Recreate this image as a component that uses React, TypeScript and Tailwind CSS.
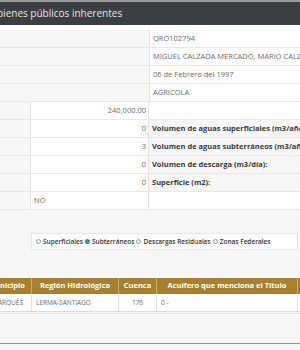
const valueRows = ["QRO102794", "MIGUEL CALZADA MERCADO, MARIO CALZADA MERCADO", "06 de Febrero del 1997", "AGRICOLA"];

const numberRows: { value: string; label: string; left?: boolean }[] = [
  { value: "240,000.00", label: "" },
  { value: "0", label: "Volumen de aguas superficiales (m3/año):" },
  { value: "3", label: "Volumen de aguas subterráneos (m3/año):" },
  { value: "0", label: "Volumen de descarga (m3/día):" },
  { value: "0", label: "Superficie (m2):" },
  { value: "NO", label: "", left: true },
];

const radios = [
  { label: "Superficiales", checked: false },
  { label: "Subterráneos", checked: true },
  { label: "Descargas Residuales", checked: false },
  { label: "Zonas Federales", checked: false },
];

function Radio({ checked }: { checked: boolean }) {
  return (
    <span
      className={`inline-block w-[5px] h-[5px] rounded-full border ${
        checked ? "border-[#2a7f93] bg-[#3b98ad]" : "border-[#9a9a9a] bg-white"
      }`}
    />
  );
}

export default function App() {
  return (
    <div className="w-[300px] h-[350px] overflow-hidden bg-[#f6f6f6] font-['Open_Sans',sans-serif] text-[#6a6a6a]">
      <div className="h-[2px] bg-[#9c9c9c]" />
      <div className="h-[23px] bg-[#3b3f42] flex items-center overflow-hidden">
        <span className="ml-[-3px] text-[10px] text-[#e4e4e4] whitespace-nowrap">bienes públicos inherentes</span>
      </div>
      <div className="h-[5px] bg-white" />

      {valueRows.map((v) => (
        <div key={v} className="flex h-[18px] border-b border-[#e8e8e8]">
          <div className="w-[149px] bg-[#f7f7f7]" />
          <div className="flex-1 bg-white border-l border-[#e3e3e3] flex items-center pl-[3px] text-[7.5px] whitespace-nowrap overflow-hidden">
            {v}
          </div>
        </div>
      ))}

      {numberRows.map((r, i) => (
        <div key={i} className="flex h-[18px] border-b border-[#e8e8e8]">
          <div className="w-[30px] bg-[#f7f7f7]" />
          <div
            className={`w-[119px] bg-white border-x border-[#e3e3e3] flex items-center text-[7.5px] ${
              r.left ? "pl-[3px]" : "justify-end pr-[2px]"
            }`}
          >
            {r.value}
          </div>
          <div
            className={`flex-1 flex items-center pl-[3px] text-[7.5px] font-bold text-[#3a3a3a] whitespace-nowrap overflow-hidden ${
              r.label ? "bg-[#f7f7f7]" : "bg-white"
            }`}
          >
            {r.label}
          </div>
        </div>
      ))}

      <div className="h-[23px]" />

      <div className="flex h-[17px]">
        <div className="w-[31px]" />
        <div className="w-[267px] bg-white border border-[#e8e8e8] flex items-center gap-[2px] pl-[4px] text-[6.5px] font-semibold text-[#333] whitespace-nowrap">
          {radios.map((r) => (
            <span key={r.label} className="flex items-center gap-[2px]">
              <Radio checked={r.checked} />
              {r.label}
            </span>
          ))}
        </div>
      </div>

      <div className="h-[28px]" />

      <div className="flex h-[16px] bg-[#a7812e] text-white text-[7.5px] font-bold whitespace-nowrap">
        <div className="w-[32px] overflow-hidden flex items-center justify-end pr-[6px] border-r border-[#c9ad6e]">Municipio</div>
        <div className="w-[87px] flex items-center justify-center border-r border-[#c9ad6e]">Región Hidrológica</div>
        <div className="w-[38px] flex items-center justify-center border-r border-[#c9ad6e]">Cuenca</div>
        <div className="w-[141px] flex items-center justify-center border-r border-[#c9ad6e]">Acuífero que menciona el Título</div>
        <div className="flex-1" />
      </div>
      <div className="flex h-[18px] bg-white border-b border-[#dcdcdc] text-[6.5px] whitespace-nowrap">
        <div className="w-[32px] overflow-hidden flex items-center justify-end pr-[8px] border-r border-[#e3e3e3]">EL MARQUÉS</div>
        <div className="w-[87px] flex items-center pl-[4px] border-r border-[#e3e3e3]">LERMA-SANTIAGO</div>
        <div className="w-[38px] flex items-center justify-center border-r border-[#e3e3e3]">176</div>
        <div className="w-[141px] flex items-center pl-[4px] border-r border-[#e3e3e3]">0 -</div>
        <div className="flex-1" />
      </div>
      <div className="h-[2px] border-b border-[#e2e2e2]" />

      <div className="h-[29px]" />
      <div className="h-px bg-[#a89468]" />
    </div>
  );
}
